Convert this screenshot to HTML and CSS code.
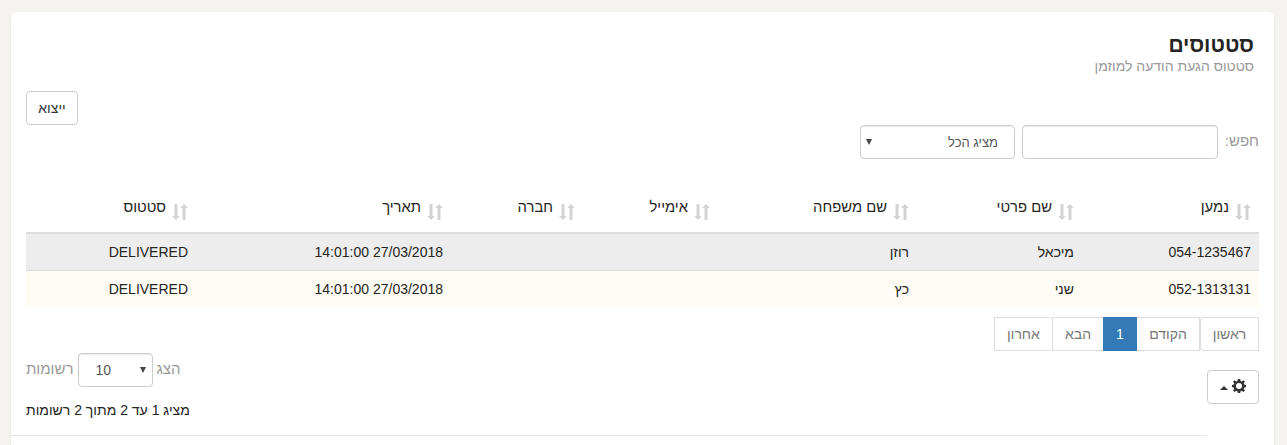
FILE: index.html
```html
<!DOCTYPE html>
<html lang="he" dir="rtl">
<head>
<meta charset="utf-8">
<title>סטטוסים</title>
<link rel="stylesheet" href="styles.css">
</head>
<body>
<svg class="defs" aria-hidden="true">
  <symbol id="sort" viewBox="0 0 16 16"><path d="M2.500 0h3v12h2.200L4 16 0 12h2.500zM10.500 16h3V4H16L12 0 8.200 4h2.300z"/></symbol>
</svg>
<main class="card">
  <header class="head">
    <h1 class="title">סטטוסים</h1>
    <p class="subtitle">סטטוס הגעת הודעה למוזמן</p>
  </header>
  <div class="export-row"><button class="btn export">ייצוא</button></div>
  <div class="filters">
    <label class="label search-label" for="q">חפש:</label>
    <input class="field search" id="q" type="text">
    <div class="field filter"><span>מציג הכל</span><svg class="arrow" viewBox="0 0 6 6"><path d="M0 0h6L3 6z"/></svg></div>
  </div>
  <table class="table">
    <colgroup><col class="c1"><col class="c2"><col class="c3"><col class="c4"><col class="c5"><col class="c6"><col class="c7"></colgroup>
    <thead><tr>
      <th><div class="th"><svg class="sort"><use href="#sort"/></svg><span>נמען</span></div></th>
      <th><div class="th"><svg class="sort"><use href="#sort"/></svg><span>שם פרטי</span></div></th>
      <th><div class="th"><svg class="sort"><use href="#sort"/></svg><span>שם משפחה</span></div></th>
      <th><div class="th"><svg class="sort"><use href="#sort"/></svg><span>אימייל</span></div></th>
      <th><div class="th"><svg class="sort"><use href="#sort"/></svg><span>חברה</span></div></th>
      <th><div class="th"><svg class="sort"><use href="#sort"/></svg><span>תאריך</span></div></th>
      <th><div class="th"><svg class="sort"><use href="#sort"/></svg><span>סטטוס</span></div></th>
    </tr></thead>
    <tbody>
      <tr class="odd"><td><bdi dir="ltr">054-1235467</bdi></td><td>מיכאל</td><td>רוזן</td><td></td><td></td><td>27/03/2018 14:01:00</td><td>DELIVERED</td></tr>
      <tr class="even"><td><bdi dir="ltr">052-1313131</bdi></td><td>שני</td><td>כץ</td><td></td><td></td><td>27/03/2018 14:01:00</td><td>DELIVERED</td></tr>
    </tbody>
  </table>
  <div class="footer">
    <div class="tools">
      <nav class="pager">
        <a class="page p-first">ראשון</a><a class="page p-prev">הקודם</a><a class="page p-current">1</a><a class="page p-next">הבא</a><a class="page p-last">אחרון</a>
      </nav>
      <button class="btn gear-btn">
        <svg class="gear" viewBox="0 0 14 14"><path fill-rule="evenodd" d="M5.800 0h2.400l.400 2 1.100.500 1.700-1.200 1.500 1.500-1.200 1.700.5 1.100 1.800.4v2.200l-1.800.4-.5 1.100 1.200 1.700-1.500 1.500-1.700-1.200-1.100.500-.4 1.800H5.800l-.4-1.800-1.100-.5-1.700 1.200-1.500-1.500 1.200-1.700-.5-1.100L0 8.200V6l1.800-.4.500-1.100-1.200-1.700 1.500-1.500 1.700 1.200L5.400 2zM7 4.100a3 3 0 1 0 0 6 3 3 0 0 0 0-6z"/></svg>
        <svg class="caret" viewBox="0 0 8 4"><path d="M0 4h8L4 0z"/></svg>
      </button>
    </div>
    <div class="summary">
      <div class="length"><span class="label show">הצג</span><div class="field count"><svg class="arrow" viewBox="0 0 6 6"><path d="M0 0h6L3 6z"/></svg><span>10</span></div><span class="label records">רשומות</span></div>
      <div class="info">מציג 1 עד 2 מתוך 2 רשומות</div>
    </div>
  </div>
  <div class="rule"></div>
</main>
</body>
</html>
```
FILE: styles.css
```css
* { box-sizing: border-box; }
body { margin: 0; height: 445px; overflow: hidden; background: #f4f3ef; padding: 12px 13px 0 11px; font: 14px/20px "Liberation Sans", sans-serif; color: #252422; }
.defs { position: absolute; width: 0; height: 0; }
.card { height: 450px; background: #fff; border-radius: 6px; box-shadow: 0 2px 2px rgba(204, 197, 185, .5); }
.head { height: 79px; padding: 20px 20px 0; }
.title { margin: 0; font-size: 21px; line-height: 26px; font-weight: 700; }
.subtitle { margin: 0; color: #9a9a9a; line-height: 17px; }
.export-row { display: flex; justify-content: flex-end; padding-left: 15px; height: 34px; }
.btn { height: 34px; background: #fff; border: 1px solid #ccc; border-radius: 4px; color: #333; font: 14px/20px "Liberation Sans", sans-serif; padding: 0; }
.export { width: 52px; }
.filters { display: flex; height: 34px; padding-right: 15px; }
.label { color: #9a9a9a; font-size: 15px; line-height: 31px; white-space: nowrap; }
.search-label { width: 34px; }
.field { height: 34px; border: 1px solid #ccc; border-radius: 4px; background: #fff; box-shadow: inset 0 1px 1px rgba(0, 0, 0, .075); color: #555; display: flex; align-items: center; justify-content: space-between; }
.search { width: 196px; margin: 0 7px; }
.filter { width: 155px; padding: 0 16px 0 5px; font-size: 13px; }
.filter span { padding-top: 2px; }
.arrow { width: 6px; height: 6px; fill: #444; }
.table { table-layout: fixed; width: 1233px; margin: 31px 15px 0 0; border-collapse: separate; border-spacing: 0; }
.c1 { width: 177px; } .c2 { width: 165px; } .c3 { width: 199px; } .c4 { width: 135px; } .c5 { width: 132px; } .c6 { width: 255px; } .c7 { width: 170px; }
.table th { height: 44px; padding: 0 8px 0 0; border-bottom: 2px solid #ddd; font-weight: 400; font-size: 14.8px; text-align: right; vertical-align: top; }
.th { display: flex; gap: 6px; padding-top: 7px; }
.sort { width: 16px; height: 16px; margin-top: 7px; fill: #d3d3d3; }
.table td { height: 37px; padding: 0 8px; text-align: right; }
.odd td { background: #ededed; border-bottom: 1px solid #ddd; }
.even td { background: #fffcf5; height: 36px; }
.footer { display: flex; justify-content: space-between; padding: 10px 15px 0; height: 128px; }
.pager { display: flex; height: 34px; }
.page { display: block; height: 34px; border: 1px solid #ddd; text-align: center; line-height: 32px; color: #777; }
.p-first { width: 59px; border-radius: 0 4px 4px 0 / 0 0 0 0; border-top-left-radius: 4px; border-bottom-left-radius: 4px; }
.p-prev { width: 63px; border-left: 0; }
.p-current { width: 34px; background: #337ab7; border-color: #337ab7; color: #fff; }
.p-next { width: 51px; border-right: 0; }
.p-last { width: 58px; border-right: 0; border-radius: 0 4px 4px 0; }
.gear-btn { width: 52px; margin-top: 19px; display: flex; align-items: center; justify-content: center; gap: 4px; padding-right: 1px; }
.gear { width: 14px; height: 14px; fill: #333; margin-top: -2px; }
.caret { width: 8px; height: 4px; fill: #333; margin-top: 2px; }
.summary { padding-top: 36px; display: flex; flex-direction: column; align-items: flex-end; }
.length { display: flex; height: 34px; }
.show { margin-left: 3px; }
.count { width: 75px; padding: 0 6px 0 16px; }
.records { margin-right: 5px; }
.info { margin-top: 13px; white-space: nowrap; }
.rule { height: 1px; width: 1196px; margin-right: 67px; background: #e8e7e3; }
```
